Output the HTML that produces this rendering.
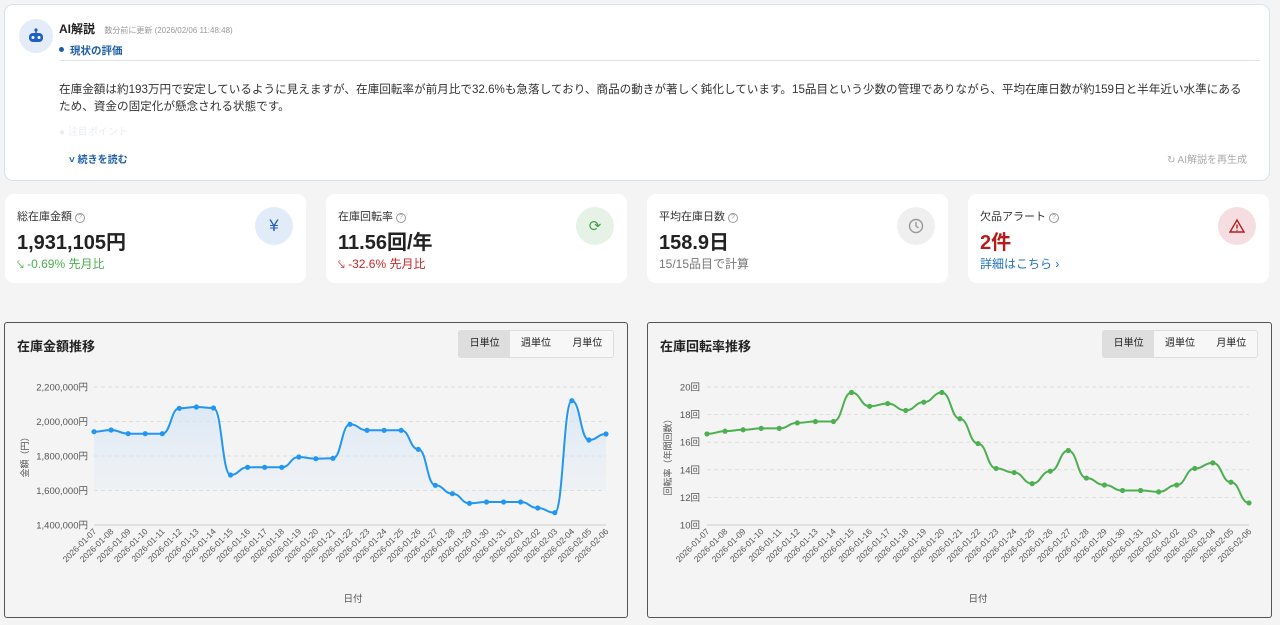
<!DOCTYPE html>
<html><head><meta charset="utf-8"><style>
*{box-sizing:border-box;margin:0;padding:0}
body{width:1280px;height:625px;background:#f4f4f4;font-family:"Liberation Sans","Noto Sans CJK JP",sans-serif;color:#222;position:relative;overflow:hidden}
.ai{position:absolute;left:4px;top:4px;width:1266px;height:177px;background:#fff;border:1px solid #d5e3f1;border-radius:9px}
.av{position:absolute;left:14px;top:14px;width:34px;height:34px;border-radius:50%;background:#e3ecf8}
.card{position:absolute;top:194px;width:301px;height:89px;background:#fff;border-radius:9px}
.lbl{position:absolute;left:12px;top:14px;font-size:11px;color:#333}
.q{display:inline-block;width:10px;height:10px;border:1px solid #999;border-radius:50%;font-size:7px;text-align:center;line-height:8px;color:#999;vertical-align:1px;margin-left:3px}
.val{position:absolute;left:12px;top:32px;font-size:20px;font-weight:bold;color:#222}
.sub{position:absolute;left:12px;top:61px;font-size:12px}
.ic{position:absolute;right:13px;top:13px;width:38px;height:38px;border-radius:50%;display:flex;align-items:center;justify-content:center}
.panel{position:absolute;top:322px;height:296px;border:1px solid #555;border-radius:3px;background:#f4f4f4}
.ptitle{position:absolute;left:12px;top:13px;font-size:13px;font-weight:bold}
.seg{position:absolute;right:13px;top:7px;width:156px;height:28px;border:1px solid #ddd;border-radius:3px;display:flex;font-size:10px;background:#f7f7f7}
.seg div{flex:1;text-align:center;line-height:26px}
.seg div:first-child{background:#dedede}
svg text{font-family:"Liberation Sans","Noto Sans CJK JP",sans-serif}
</style></head><body>
<div class="ai">
 <div class="av"><svg width="34" height="34" viewBox="0 0 34 34"><circle cx="17" cy="11" r="1.6" fill="#1f5fc2"/><rect x="16.3" y="11" width="1.4" height="3" fill="#1f5fc2"/><rect x="10" y="14" width="14" height="9" rx="4" fill="#1f5fc2"/><circle cx="14" cy="18.5" r="1.5" fill="#fff"/><circle cx="20" cy="18.5" r="1.5" fill="#fff"/></svg></div>
 <div style="position:absolute;left:54px;top:15px;font-size:12px;font-weight:bold">AI解説 <span style="font-size:8px;color:#999;font-weight:normal;margin-left:6px">数分前に更新 (2026/02/06 11:48:48)</span></div>
 <div style="position:absolute;left:54px;top:38px;font-size:10.5px;font-weight:bold;color:#1f5fa8"><span style="display:inline-block;width:5px;height:5px;border-radius:50%;background:#1f5fa8;vertical-align:2px;margin-right:6px"></span>現状の評価</div>
 <div style="position:absolute;left:54px;top:55px;width:1201px;border-top:1px solid #dfe6ee"></div>
 <div style="position:absolute;left:54px;top:76px;width:1190px;font-size:11.6px;line-height:17px;color:#333">在庫金額は約193万円で安定しているように見えますが、在庫回転率が前月比で32.6%も急落しており、商品の動きが著しく鈍化しています。15品目という少数の管理でありながら、平均在庫日数が約159日と半年近い水準にあるため、資金の固定化が懸念される状態です。</div>
 <div style="position:absolute;left:54px;top:118px;font-size:10px;color:#e8edf3">● 注目ポイント</div>
 <div style="position:absolute;left:64px;top:146px;font-size:10px;color:#1f5fa8;font-weight:bold">˅ 続きを読む</div>
 <div style="position:absolute;right:22px;top:146px;font-size:10px;color:#aaa">↻ AI解説を再生成</div>
</div>
<div class="card" style="left:5px"><div class="lbl">総在庫金額<span class="q">?</span></div><div class="val">1,931,105円</div><div class="sub" style="color:#4caf50">⤥ -0.69% 先月比</div><div class="ic" style="background:#e2ebf8;color:#1f5fc2;font-size:17px">¥</div></div>
<div class="card" style="left:326px"><div class="lbl">在庫回転率<span class="q">?</span></div><div class="val">11.56回/年</div><div class="sub" style="color:#c62828">⤥ -32.6% 先月比</div><div class="ic" style="background:#e6f2e6;color:#43a047;font-size:15px">⟳</div></div>
<div class="card" style="left:647px"><div class="lbl">平均在庫日数<span class="q">?</span></div><div class="val">158.9日</div><div class="sub" style="color:#777">15/15品目で計算</div><div class="ic" style="background:#efefef"><svg width="16" height="16" viewBox="0 0 16 16"><circle cx="8" cy="8" r="6.5" fill="none" stroke="#999" stroke-width="1.4"/><path d="M8 4v4l2.5 2" fill="none" stroke="#999" stroke-width="1.4"/></svg></div></div>
<div class="card" style="left:968px"><div class="lbl">欠品アラート<span class="q">?</span></div><div class="val" style="color:#b71c1c">2件</div><div class="sub" style="color:#1f6fb8">詳細はこちら ›</div><div class="ic" style="background:#f5dde2"><svg width="16" height="16" viewBox="0 0 16 16"><path d="M8 2L15 14H1Z" fill="none" stroke="#b71c1c" stroke-width="1.4"/><path d="M8 6.5v4M8 11.8v1" stroke="#b71c1c" stroke-width="1.4"/></svg></div></div>

<div class="panel" style="left:4px;width:624px"><div class="ptitle">在庫金額推移</div><div class="seg"><div>日単位</div><div>週単位</div><div>月単位</div></div></div>
<div class="panel" style="left:647px;width:625px"><div class="ptitle">在庫回転率推移</div><div class="seg"><div>日単位</div><div>週単位</div><div>月単位</div></div></div>
<svg id="ch" width="1280" height="625" style="position:absolute;left:0;top:0"></svg>
<script>
var s='';
var d=['01-07','01-08','01-09','01-10','01-11','01-12','01-13','01-14','01-15','01-16','01-17','01-18','01-19','01-20','01-21','01-22','01-23','01-24','01-25','01-26','01-27','01-28','01-29','01-30','01-31','02-01','02-02','02-03','02-04','02-05','02-06'];
var L=[431.7,430,433.7,433.7,433.7,408.3,407,408,475,467.3,467.3,467.3,457,458.7,458.3,424.3,430.3,430.3,430.3,449.3,485.3,493.7,503.3,502,502,502,508,512.7,400.7,440,434];
var R=[16.6,16.8,16.9,17,17,17.4,17.5,17.5,19.6,18.6,18.8,18.3,18.9,19.6,17.7,15.9,14.1,13.8,13,13.9,15.4,13.4,12.9,12.5,12.5,12.4,12.9,14.1,14.5,13.1,11.6].map(function(v){return 525-(v-10)*13.8});
function chart(x0,x1,ys,col,yl,labels,ylab,lx,tx){
 var st=(x1-x0)/30,pts=ys.map(function(y,i){return [x0+i*st,y]});
 var gs=138/(labels.length-1);
 labels.forEach(function(t,i){var y=387+i*gs;s+='<line x1="'+x0+'" x2="'+x1+'" y1="'+y+'" y2="'+y+'" stroke="#ddd" stroke-dasharray="4 3"/><text x="'+lx+'" y="'+(y+3.5)+'" font-size="9.5" text-anchor="end" fill="#555">'+t+'</text>';});
 s+='<line x1="'+x0+'" x2="'+x1+'" y1="525" y2="525" stroke="#ccc"/>';
 if(col=='#2196f3'){s+='<defs><linearGradient id="g" x1="0" y1="0" x2="0" y2="1"><stop offset="0" stop-color="#cfe2f6" stop-opacity=".7"/><stop offset="1" stop-color="#e8eef5" stop-opacity=".2"/></linearGradient></defs><path d="M'+x0+' 490 L'+pts.map(function(p){return p.join(' ')}).join(' L')+' L'+x1+' 490Z" fill="url(#g)"/>';}
 var p='M'+pts[0].join(' ');for(var i=1;i<pts.length;i++){var a=pts[i-1],b=pts[i],m=(a[0]+b[0])/2;p+=' C'+m+' '+a[1]+' '+m+' '+b[1]+' '+b[0]+' '+b[1];}
 s+='<path d="'+p+'" fill="none" stroke="'+col+'" stroke-width="2"/>';
 pts.forEach(function(q,i){s+='<circle cx="'+q[0]+'" cy="'+q[1]+'" r="2.6" fill="'+col+'"/><text transform="translate('+(q[0]+3)+' 532) rotate(-45)" font-size="8.5" text-anchor="end" fill="#555">2026-'+d[i]+'</text>';});
 s+='<text transform="translate('+yl+' 455) rotate(-90)" font-size="9" text-anchor="middle" fill="#555">'+ylab+'</text><text x="'+tx+'" y="602" font-size="9.5" text-anchor="middle" fill="#555">日付</text>';
}
chart(94,606,L,'#2196f3',28,['2,200,000円','2,000,000円','1,800,000円','1,600,000円','1,400,000円'],'金額（円）',88,353);
chart(707,1249,R,'#4caf50',671,['20回','18回','16回','14回','12回','10回'],'回転率（年間回数）',700,978);
document.getElementById('ch').innerHTML=s;
</script>
</body></html>
